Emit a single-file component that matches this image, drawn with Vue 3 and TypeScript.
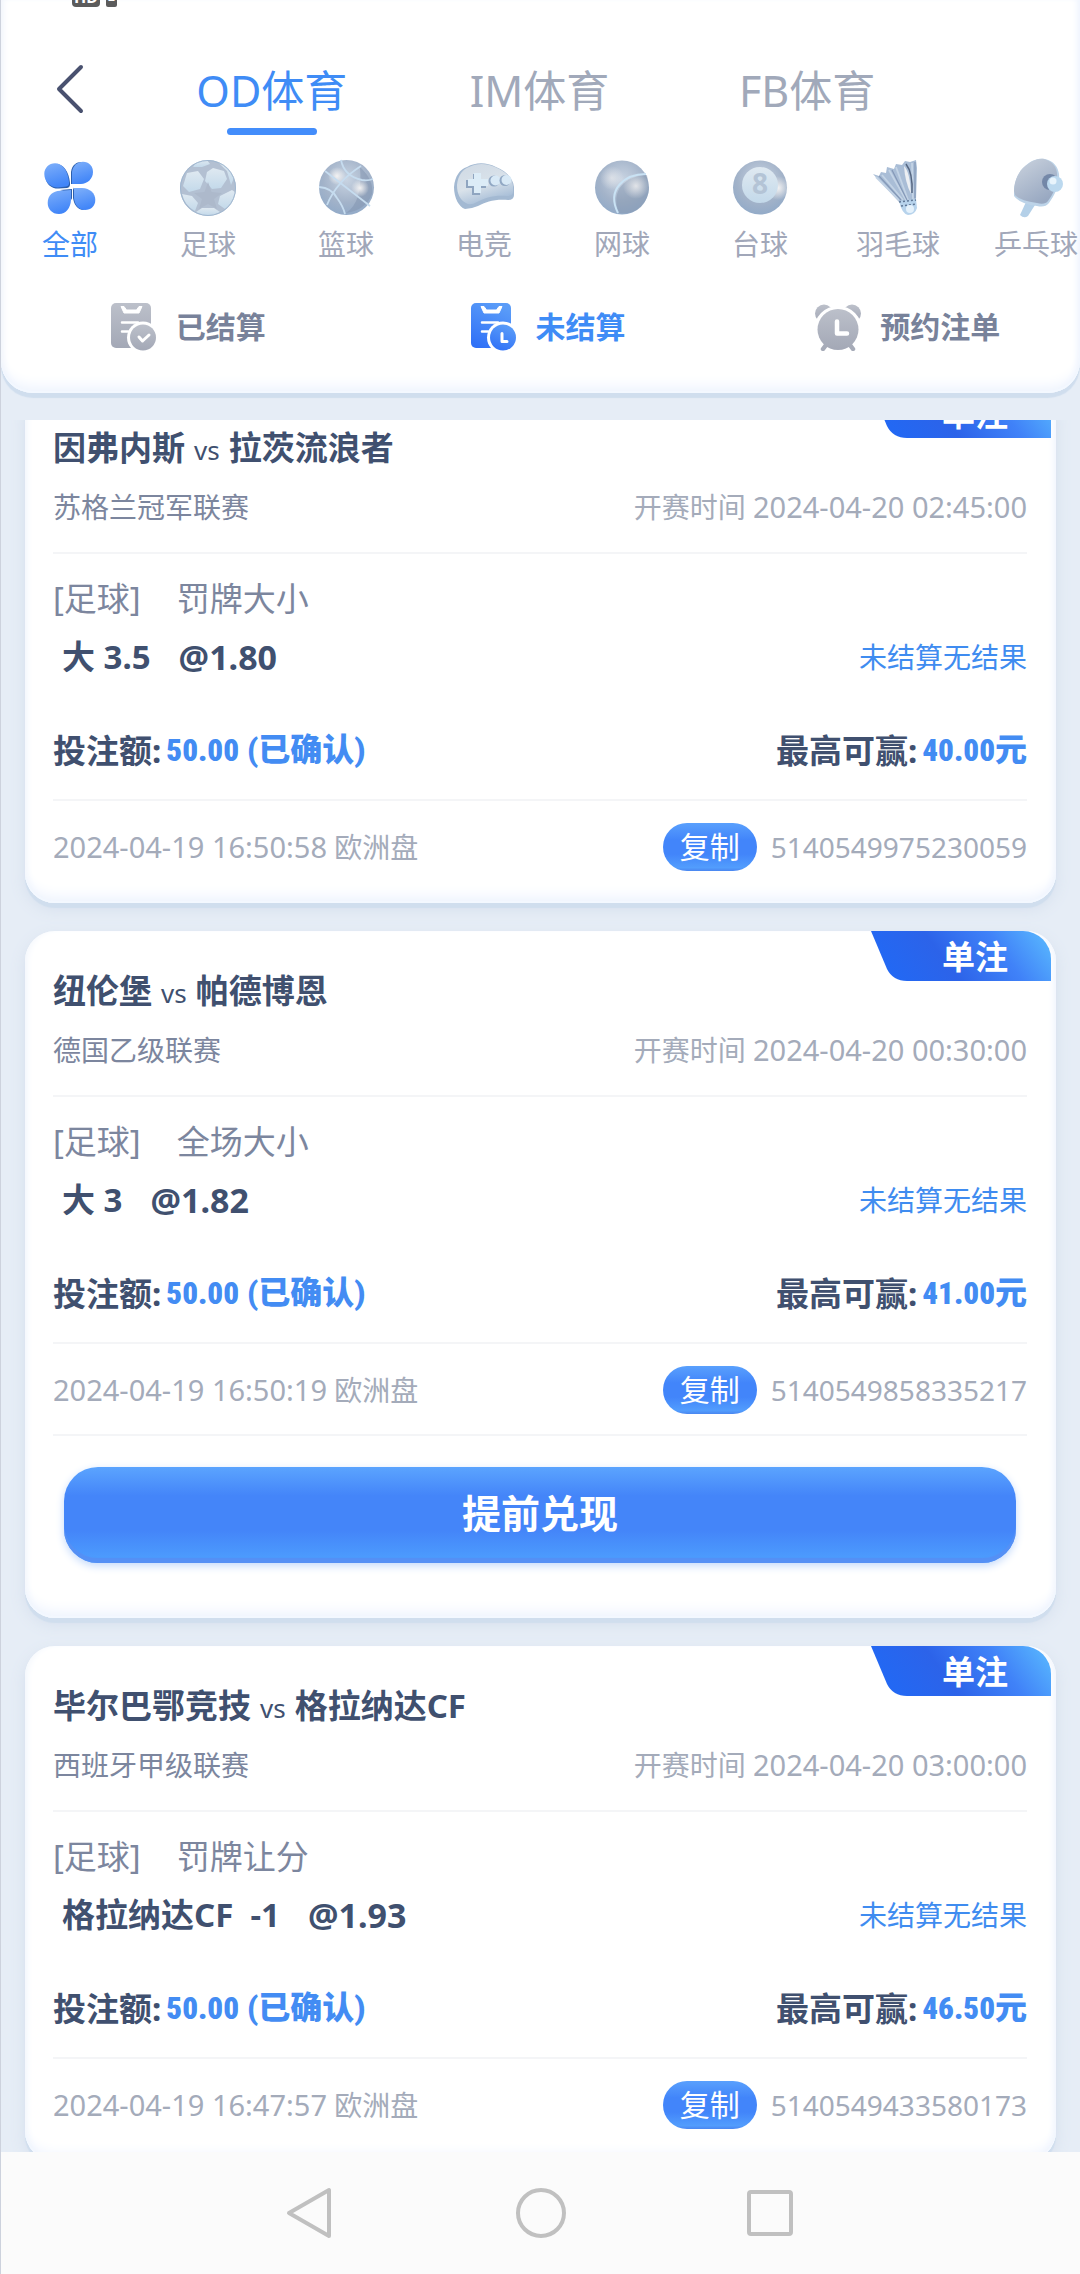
<script setup lang="ts">
import { ref } from 'vue'

interface Sport {
  id: string
  label: string
}

interface Bet {
  id: string
  home: string
  away: string
  league: string
  kickoff: string
  market: string
  pick: string
  odds: string
  stake: string
  payout: string
  placedAt: string
  cashOut: boolean
}

const venues = ['OD体育', 'IM体育', 'FB体育']
const activeVenue = ref(0)

const sports: Sport[] = [
  { id: 'all', label: '全部' },
  { id: 'soccer', label: '足球' },
  { id: 'basket', label: '篮球' },
  { id: 'esport', label: '电竞' },
  { id: 'tennis', label: '网球' },
  { id: 'pool', label: '台球' },
  { id: 'shuttle', label: '羽毛球' },
  { id: 'pingpong', label: '乒乓球' },
]
const activeSport = ref('all')

const filters = [
  { id: 'settled', label: '已结算' },
  { id: 'open', label: '未结算' },
  { id: 'reserved', label: '预约注单' },
]
const activeFilter = ref('open')

const bets: Bet[] = [
  {
    id: '5140549975230059',
    home: '因弗内斯',
    away: '拉茨流浪者',
    league: '苏格兰冠军联赛',
    kickoff: '2024-04-20 02:45:00',
    market: '罚牌大小',
    pick: '大 3.5',
    odds: '@1.80',
    stake: '50.00',
    payout: '40.00',
    placedAt: '2024-04-19 16:50:58',
    cashOut: false,
  },
  {
    id: '5140549858335217',
    home: '纽伦堡',
    away: '帕德博恩',
    league: '德国乙级联赛',
    kickoff: '2024-04-20 00:30:00',
    market: '全场大小',
    pick: '大 3',
    odds: '@1.82',
    stake: '50.00',
    payout: '41.00',
    placedAt: '2024-04-19 16:50:19',
    cashOut: true,
  },
  {
    id: '5140549433580173',
    home: '毕尔巴鄂竞技',
    away: '格拉纳达CF',
    league: '西班牙甲级联赛',
    kickoff: '2024-04-20 03:00:00',
    market: '罚牌让分',
    pick: '格拉纳达CF  -1',
    odds: '@1.93',
    stake: '50.00',
    payout: '46.50',
    placedAt: '2024-04-19 16:47:57',
    cashOut: false,
  },
]
</script>

<template>
  <div class="app">
    <svg class="defs" width="0" height="0" aria-hidden="true">
      <defs>
        <linearGradient id="petal" x1="0" y1="0" x2="0.3" y2="1">
          <stop offset="0" stop-color="#7fb0fa" />
          <stop offset="1" stop-color="#4286f8" />
        </linearGradient>
        <radialGradient id="ball" cx="0.5" cy="0.35" r="0.7">
          <stop offset="0" stop-color="#c9d4e2" />
          <stop offset="0.6" stop-color="#a3b3c9" />
          <stop offset="1" stop-color="#8fa9c8" />
        </radialGradient>
        <radialGradient id="glow">
          <stop offset="0" stop-color="#f3f2f2" />
          <stop offset="1" stop-color="#f3f2f2" stop-opacity="0" />
        </radialGradient>
        <linearGradient id="pale" x1="0" y1="0" x2="0.4" y2="1">
          <stop offset="0" stop-color="#cfd9e4" />
          <stop offset="0.6" stop-color="#d9e2ea" />
          <stop offset="1" stop-color="#a9bfd8" />
        </linearGradient>
        <linearGradient id="patch" x1="0" y1="0" x2="0" y2="1">
          <stop offset="0" stop-color="#dfe9f1" />
          <stop offset="1" stop-color="#c3d9ea" />
        </linearGradient>
        <linearGradient id="blade" x1="0" y1="0" x2="0.6" y2="1">
          <stop offset="0" stop-color="#ccd4df" />
          <stop offset="1" stop-color="#98a8c1" />
        </linearGradient>
        <linearGradient id="greyFill" x1="0" y1="0" x2="0" y2="1">
          <stop offset="0" stop-color="#bcc0ca" />
          <stop offset="1" stop-color="#a3a8b6" />
        </linearGradient>
        <linearGradient id="blueFill" x1="0.6" y1="0" x2="0.2" y2="1">
          <stop offset="0" stop-color="#5a9cf8" />
          <stop offset="1" stop-color="#2f70f7" />
        </linearGradient>
        <linearGradient id="badgeFill" x1="0" y1="0.2" x2="1" y2="0">
          <stop offset="0" stop-color="#2368f3" />
          <stop offset="0.32" stop-color="#2c63e9" />
          <stop offset="0.66" stop-color="#4082f8" />
          <stop offset="1" stop-color="#5bbcff" />
        </linearGradient>
      </defs>
    </svg>

    <header class="panel">
      <div class="status"><span class="chip">HD</span><span class="chip small">2</span></div>

      <div class="titlebar">
        <button class="back" type="button" aria-label="返回">
          <svg width="30" height="52" viewBox="0 0 30 52" fill="none">
            <path d="M26 4 L4 26 L26 48" stroke="#49516f" stroke-width="4" stroke-linecap="round" stroke-linejoin="round" />
          </svg>
        </button>
        <nav class="venues">
          <button
            v-for="(venue, i) in venues"
            :key="venue"
            type="button"
            class="venue"
            :class="{ on: i === activeVenue }"
            @click="activeVenue = i"
          >{{ venue }}</button>
        </nav>
      </div>

      <nav class="sports">
        <button
          v-for="sport in sports"
          :key="sport.id"
          type="button"
          class="sport"
          :class="{ on: sport.id === activeSport }"
          @click="activeSport = sport.id"
        >
          <svg width="60" height="60" viewBox="0 0 60 60" fill="none">
            <g v-if="sport.id === 'all'">
              <g fill="#2b5fae">
                <path d="M30 25C29 13 23 6 16 6L6 22C8 28 13 31 19 30.500L27 30Q30.500 29.500 30 25Z" />
                <path d="M31 26L31 14C32 7 36 4 42 4L36 26Z" />
                <path d="M32 31L32 42L27 34L20 32Z" />
                <path d="M33 29.500L33 40C34 46 37 52 44 52Z" />
              </g>
              <g fill="url(#petal)">
                <path d="M29 24C28 12 22 5.300 15 5.300C9 5.300 4.300 10 4.300 16C4.300 24 11 29.800 18 29.500L26 28.500Q29.500 28 29 24Z" />
                <path d="M32 26L32 14C33 7 38 3.700 43 3.700C49 3.700 53 8 53 14C53 21 47 26 41 26Z" />
                <path d="M31 32L31 42C30.500 50 26 56 19 56C12 56 7.700 51 7.700 45C7.700 37 13 33 20 32.700Z" />
                <path d="M34 30L42 30C50 30.500 55.300 35 55.300 42C55.300 48 51 52 45 52C38 52 34.500 46 34 40Z" />
              </g>
            </g>
            <g v-else-if="sport.id === 'soccer'">
              <circle cx="30" cy="30" r="28" fill="#b3c0d2" />
              <g fill="url(#patch)">
                <path d="M9 15L20 13L26 21L22 31L11 34L5 28Z" />
                <path d="M29 14L35 10L46 13L49 21L43 30L34 31L27 23Z" />
                <path d="M4 36L14 38L20 45L17 53Q7 48 4 36Z" />
                <path d="M24 50L36 50L42 54Q30 61 18 54Z" />
                <path d="M42 38L54 32L57 34Q56 46 47 51L40 46Z" />
                <path d="M17 6Q23 2 29 2L32 6L24 9L15 9Z" />
                <path d="M40 4Q51 8 56 20L53 27L49 13Z" />
              </g>
              <path d="M30 24L33.500 34L44 35L36 41L39 51L30 46L21 51L24 41L16 35L26.500 34Z" fill="#adb9cb" />
              <circle cx="30" cy="30" r="27.500" stroke="#9fb7d0" />
            </g>
            <g v-else-if="sport.id === 'basket'">
              <circle cx="30.500" cy="29.500" r="27.500" fill="url(#ball)" />
              <path d="M44 9Q58 22 56 36Q50 52 30 55Q47 44 44 9Z" fill="#7f91ad" opacity="0.5" />
              <circle cx="44" cy="30" r="9" fill="url(#glow)" />
              <circle cx="21" cy="18" r="9" fill="url(#glow)" />
              <g stroke="#c6dcef" stroke-width="1.800">
                <path d="M9 13L54 48" />
                <path d="M11 47Q20 24 45 8" />
                <path d="M25 2Q28 18 46 22Q52 23 57 21" />
                <path d="M3 29Q16 30 21 40Q27 48 29 56" />
              </g>
            </g>
            <g v-else-if="sport.id === 'esport'">
              <path d="M0 29C1 18 6 11 13 9C22 4 32 4 42 9C52 13 59 20 60 29V37Q60 42 54 42C40 41 32 44 24 48Q17 51 11 51C5 49 0 40 0 29Z" fill="#a3b9d2" />
              <path d="M3 27C4 17 9 11 15 9C23 5 32 5 41 9C51 13 58 19 59 28V34Q59 38 53 38C39 37 31 40 23 44Q16 48 12 45C6 42 3 36 3 27Z" fill="url(#pale)" />
              <path d="M19 16H25V22H32V30H26V37H18V30H12V22H19Z" fill="#8fa5c0" />
              <path d="M20 15H27V21H34V28H27V35H20V28H14V21H20Z" fill="#dcecf7" />
              <circle cx="40" cy="23" r="5.500" fill="#91a8c4" />
              <circle cx="41.500" cy="22.500" r="5" fill="#d8e9f6" />
              <circle cx="51" cy="22.500" r="5.500" fill="#91a8c4" />
              <circle cx="52.500" cy="22" r="5" fill="#d8e9f6" />
            </g>
            <g v-else-if="sport.id === 'tennis'">
              <circle cx="30" cy="29.500" r="27" fill="url(#ball)" />
              <path d="M55 17C33 18 18 32 27 55Q52 58 57 32Z" fill="#8394ae" opacity="0.45" />
              <circle cx="44" cy="28" r="13" fill="url(#glow)" opacity="0.8" />
              <circle cx="20" cy="20" r="12" fill="url(#glow)" opacity="0.6" />
              <path d="M54 16C33 16 14 31 26 55" stroke="#c9e2f4" stroke-width="2" />
            </g>
            <g v-else-if="sport.id === 'pool'">
              <circle cx="30" cy="29.500" r="27" fill="url(#ball)" />
              <circle cx="48" cy="30" r="12" fill="url(#glow)" />
              <circle cx="30" cy="27" r="18" fill="url(#patch)" />
              <text x="30" y="36" class="eight" text-anchor="middle">8</text>
            </g>
            <g v-else-if="sport.id === 'shuttle'">
              <path d="M5 16L11 18L13 14L18 15L19 9L26 11L28 6L34 7L37 3L42 4L48 2L49 10L48 42L31 44Z" fill="#a9bdd6" />
              <path d="M8 19L31 42M14 17L35 42M21 12L38 42M28 9L40 42M44 5L45 42" stroke="#c3d3e5" stroke-width="1.800" />
              <path d="M11 18L33 42M24 12L39 42M47 4L47 40" stroke="#8599b8" stroke-width="1.200" />
              <path d="M36 8Q42 14 43 36Q37 24 36 8Z" fill="#eceff3" />
              <path d="M38 6Q45 15 44 35" stroke="#556680" stroke-width="1.500" />
              <path d="M31 43L48 41L49 50Q47 57 40 57Q34 56 31 43Z" fill="#b7d3ec" />
              <path d="M31 44L48 42M33 48L48 46" stroke="#5f7796" stroke-width="1.500" stroke-dasharray="2 2" />
              <circle cx="42" cy="51" r="4" fill="#e4f1fb" />
            </g>
            <g v-else>
              <path d="M20 44L29 47L22 58Q18 61 14 57Z" fill="#b4d0e8" />
              <path d="M8 34C8 24 12 15 17 10C25 2 32 0 39 1C48 3 52 9 53 16C54 26 49 37 43 45Q39 50 31 48Q14 46 8 38Z" fill="#bcd3e8" />
              <path d="M8 33C8 24 12 15 17 10C25 3 32 0 38 1C46 3 51 9 51 16C52 26 48 35 42 43Q39 47 31 45Q14 43 9 37Z" fill="url(#blade)" />
              <circle cx="44" cy="24" r="8" fill="#5c7399" opacity="0.7" />
              <circle cx="49" cy="26" r="8" fill="#bcd9ef" />
              <circle cx="47" cy="23" r="3.500" fill="#e8f4fc" />
            </g>
          </svg>
          <span>{{ sport.label }}</span>
        </button>
      </nav>

      <div class="filters">
        <button
          v-for="filter in filters"
          :key="filter.id"
          type="button"
          class="filter"
          :class="{ on: filter.id === activeFilter }"
          @click="activeFilter = filter.id"
        >
          <svg v-if="filter.id === 'reserved'" width="48" height="48" viewBox="0 0 48 48" fill="none">
            <circle cx="9" cy="10.500" r="9" fill="url(#greyFill)" />
            <circle cx="37" cy="10.500" r="9" fill="url(#greyFill)" />
            <circle cx="23" cy="27" r="24" fill="#fff" />
            <path d="M11 42L8 46M35 42L38 46" stroke="#a6abb8" stroke-width="4.500" stroke-linecap="round" />
            <circle cx="23" cy="26.500" r="20.500" fill="url(#greyFill)" />
            <path d="M22 18.500V30.500H32" stroke="#fff" stroke-width="4.500" stroke-linecap="round" stroke-linejoin="round" />
          </svg>
          <svg v-else width="48" height="48" viewBox="0 0 48 48" fill="none">
            <rect width="40" height="45" rx="5" :fill="filter.id === activeFilter ? 'url(#blueFill)' : 'url(#greyFill)'" />
            <path d="M10 3.500H13L15.500 7H25.500L28 3.500H31L28 10H13Z" fill="#fff" stroke="#fff" stroke-linejoin="round" />
            <path d="M11 19.500H27M11 28.500H17" stroke="#fff" stroke-width="2.500" stroke-linecap="round" />
            <circle cx="32" cy="34.500" r="16" fill="#fff" />
            <circle cx="32" cy="34.500" r="13" :fill="filter.id === activeFilter ? 'url(#blueFill)' : 'url(#greyFill)'" />
            <path v-if="filter.id === 'settled'" d="M28 34L31.500 38L38 32" stroke="#fff" stroke-width="3" stroke-linecap="round" stroke-linejoin="round" />
            <path v-else d="M31 30.500V38.500H36" stroke="#fff" stroke-width="3" stroke-linecap="round" stroke-linejoin="round" />
          </svg>
          <span>{{ filter.label }}</span>
        </button>
      </div>
    </header>

    <main class="viewport">
      <div class="list">
        <article v-for="bet in bets" :key="bet.id" class="card">
          <div class="badge">
            <svg viewBox="0 0 180 50" width="180" height="50" aria-hidden="true">
              <path d="M0 0H152A28 28 0 0 1 180 28V50H36Q22 50 16 38Z" fill="url(#badgeFill)" />
            </svg>
            <span>单注</span>
          </div>

          <h2 class="teams"><span>{{ bet.home }}</span><small>vs</small><span>{{ bet.away }}</span></h2>
          <div class="row league">
            <span>{{ bet.league }}</span>
            <span class="muted">开赛时间 <time>{{ bet.kickoff }}</time></span>
          </div>

          <div class="row market"><span>[足球]</span><span>{{ bet.market }}</span></div>
          <div class="row selection">
            <strong class="pick"><span>{{ bet.pick }}</span><span class="odds">{{ bet.odds }}</span></strong>
            <span class="result">未结算无结果</span>
          </div>

          <div class="row money">
            <span class="pair">投注额:<b><span class="amount">{{ bet.stake }}</span> (已确认)</b></span>
            <span class="pair">最高可赢:<b><span class="amount">{{ bet.payout }}</span>元</b></span>
          </div>

          <div class="row foot muted">
            <span><time>{{ bet.placedAt }}</time> 欧洲盘</span>
            <span class="order"><button type="button" class="copy">复制</button>{{ bet.id }}</span>
          </div>

          <div v-if="bet.cashOut" class="cash">
            <button type="button" class="cashout">提前兑现</button>
          </div>
        </article>
      </div>
    </main>

    <footer class="sysnav">
      <button type="button" aria-label="后退">
        <svg width="54" height="54" viewBox="0 0 54 54" fill="none" stroke="#c0c0c0" stroke-width="4" stroke-linejoin="round">
          <path d="M45 4V50L5 27Z" />
        </svg>
      </button>
      <button type="button" aria-label="主页">
        <svg width="54" height="54" viewBox="0 0 54 54" fill="none" stroke="#c0c0c0" stroke-width="4">
          <circle cx="27" cy="27" r="23" />
        </svg>
      </button>
      <button type="button" aria-label="最近任务">
        <svg width="54" height="54" viewBox="0 0 54 54" fill="none" stroke="#c0c0c0" stroke-width="4">
          <rect x="5" y="6" width="42" height="42" rx="2" />
        </svg>
      </button>
    </footer>
  </div>
</template>

<style>
body {
  margin: 0;
  background: #e6edf6;
}
</style>

<style scoped>
.app {
  box-sizing: border-box;
  display: flex;
  flex-direction: column;
  height: 100vh;
  overflow: hidden;
  border-left: 1px solid #cdd2dd;
  background: #e6edf6;
  color: #40506f;
  font-family: "Noto Sans", "Noto Sans CJK SC", sans-serif;
  font-size: 33px;
}
.defs {
  position: absolute;
}
button {
  margin: 0;
  padding: 0;
  border: 0;
  background: none;
  color: inherit;
  font: inherit;
  cursor: pointer;
}
svg {
  display: block;
  flex: none;
}

.panel {
  flex: none;
  padding-bottom: 42px;
  border-radius: 0 0 32px 32px;
  background: #fff;
  box-shadow:
    inset 0 -2px 0 #f3f8ff,
    inset 0 -14px 14px -8px #edf3fe,
    inset 6px 0 6px -3px #f3f6fc,
    inset -6px 0 6px -3px #f0f5fe,
    0 5px 1px #d0deee;
}
.status {
  display: flex;
  align-items: flex-end;
  gap: 6px;
  height: 7px;
  padding-left: 71px;
  overflow: hidden;
}
.chip {
  width: 28px;
  border-radius: 4px;
  background: #5c5c5c;
  color: #fff;
  font-size: 16px;
  font-weight: 700;
  line-height: 20px;
  text-align: center;
}
.chip.small {
  width: 11px;
  border-radius: 2px;
  font-size: 12px;
}
.titlebar {
  display: flex;
  height: 141px;
  padding-right: 139px;
}
.back {
  display: flex;
  align-items: center;
  justify-content: center;
  width: 137px;
  height: 164px;
}
.venues {
  display: flex;
  flex: 1;
}
.venue {
  position: relative;
  flex: 1;
  padding-top: 52px;
  height: 128px;
  color: #a1a9ba;
  font-size: 43px;
  line-height: 64px;
  display: flex;
  justify-content: center;
}
.venue.on {
  color: #3f8cf6;
}
.venue.on::after {
  content: "";
  position: absolute;
  bottom: 0;
  left: 50%;
  width: 90px;
  height: 7px;
  margin-left: -45px;
  border-radius: 4px;
  background: #438dfb;
}
.sports {
  display: flex;
  padding-top: 10px;
  overflow: hidden;
}
.sport {
  display: flex;
  flex: 0 0 138px;
  flex-direction: column;
  align-items: center;
  gap: 6px;
  color: #a1a7b9;
  font-size: 28px;
  line-height: 40px;
  white-space: nowrap;
}
.sport.on {
  color: #3f8cf6;
}
.eight {
  fill: #b4c4d6;
  font-size: 28px;
  font-weight: 700;
}
.filters {
  display: flex;
  padding-top: 39px;
}
.filter {
  display: flex;
  flex: 1;
  align-items: center;
  justify-content: center;
  gap: 17px;
  padding-left: 15px;
  color: #78829a;
  font-size: 30px;
  font-weight: 700;
  line-height: 48px;
}
.filter.on {
  color: #3f8cf6;
}

.viewport {
  flex: 1;
  min-height: 0;
  margin-top: 27px;
  padding: 0 24px;
  overflow: hidden;
}
.list {
  display: flex;
  flex-direction: column;
  gap: 28px;
  margin-top: -32px;
}
.card {
  position: relative;
  padding: 38px 29px 32px 28px;
  border-radius: 30px;
  background: #fff;
  box-shadow:
    inset 0 -2px 0 #f3f8ff,
    inset 0 -14px 14px -8px #edf3fe,
    inset 6px 0 6px -3px #f5f8fd,
    inset -6px 0 6px -3px #f2f6fe,
    0 5px 1px #d0deee,
    0 6px 16px #d5dfed;
}
.badge {
  position: absolute;
  top: 0;
  right: 5px;
}
.badge span {
  position: absolute;
  top: 2px;
  left: 71px;
  color: #fff;
  font-weight: 700;
  line-height: 48px;
}
.teams {
  display: flex;
  align-items: baseline;
  gap: 9px;
  margin: 0;
  font-size: 33px;
  font-weight: 700;
  line-height: 44px;
}
.teams small {
  font-size: 26px;
  font-weight: 400;
  line-height: 26px;
}
.row {
  display: flex;
  align-items: center;
  justify-content: space-between;
  line-height: 44px;
}
.muted {
  color: #a4abba;
}
time {
  font-size: 29px;
}
.league {
  height: 40px;
  margin-top: 17px;
  padding-bottom: 25px;
  border-bottom: 2px solid #f4f5f7;
  font-size: 28px;
  line-height: 40px;
}
.league > :first-child {
  color: #7c869e;
}
.market {
  justify-content: flex-start;
  gap: 36px;
  padding-top: 23px;
  color: #7c869e;
}
.selection {
  height: 44px;
  margin-top: 14px;
  padding-left: 9px;
}
.pick {
  display: flex;
  gap: 28px;
  white-space: pre;
}
.odds {
  font-size: 34px;
}
.result {
  color: #3f8cf0;
  font-size: 28px;
}
.money {
  height: 44px;
  margin-top: 50px;
  padding-bottom: 26px;
  border-bottom: 2px solid #f4f5f7;
  font-weight: 700;
}
.pair {
  display: flex;
  gap: 5px;
}
.pair b {
  color: #438cf3;
  font-family: Roboto, "Noto Sans CJK SC", sans-serif;
  font-size: 32px;
  line-height: 42px;
}
.amount {
  font-family: "Roboto Condensed", Roboto, sans-serif;
  font-size: 31px;
}
.foot {
  height: 48px;
  padding-top: 22px;
  font-size: 28px;
  line-height: 48px;
}
.order {
  display: flex;
  gap: 14px;
}
.copy {
  width: 94px;
  height: 48px;
  border-radius: 24px;
  background: linear-gradient(#59a0fd, #4285fa 35%, #4285fa 65%, #529dfd 93%, #4a86f0);
  color: #fff;
  font-size: 30px;
  line-height: 48px;
}
.cash {
  margin-top: 20px;
  padding: 31px 11px 23px;
  border-top: 2px solid #f4f5f7;
}
.cashout {
  display: block;
  width: 100%;
  height: 96px;
  border-radius: 34px;
  background: linear-gradient(#5ba4fe, #4485f9 30%, #4485f9 66%, #4c9bfd 94%);
  box-shadow: inset 0 -5px 1px #5590f5, 0 3px 8px #c4dafb;
  color: #fff;
  font-size: 39px;
  font-weight: 700;
  line-height: 56px;
  padding-bottom: 4px;
}

.sysnav {
  display: flex;
  flex: none;
  align-items: center;
  justify-content: center;
  height: 122px;
  background: #fbfbfb;
}
.sysnav button {
  display: flex;
  justify-content: center;
  width: 230px;
}
</style>
